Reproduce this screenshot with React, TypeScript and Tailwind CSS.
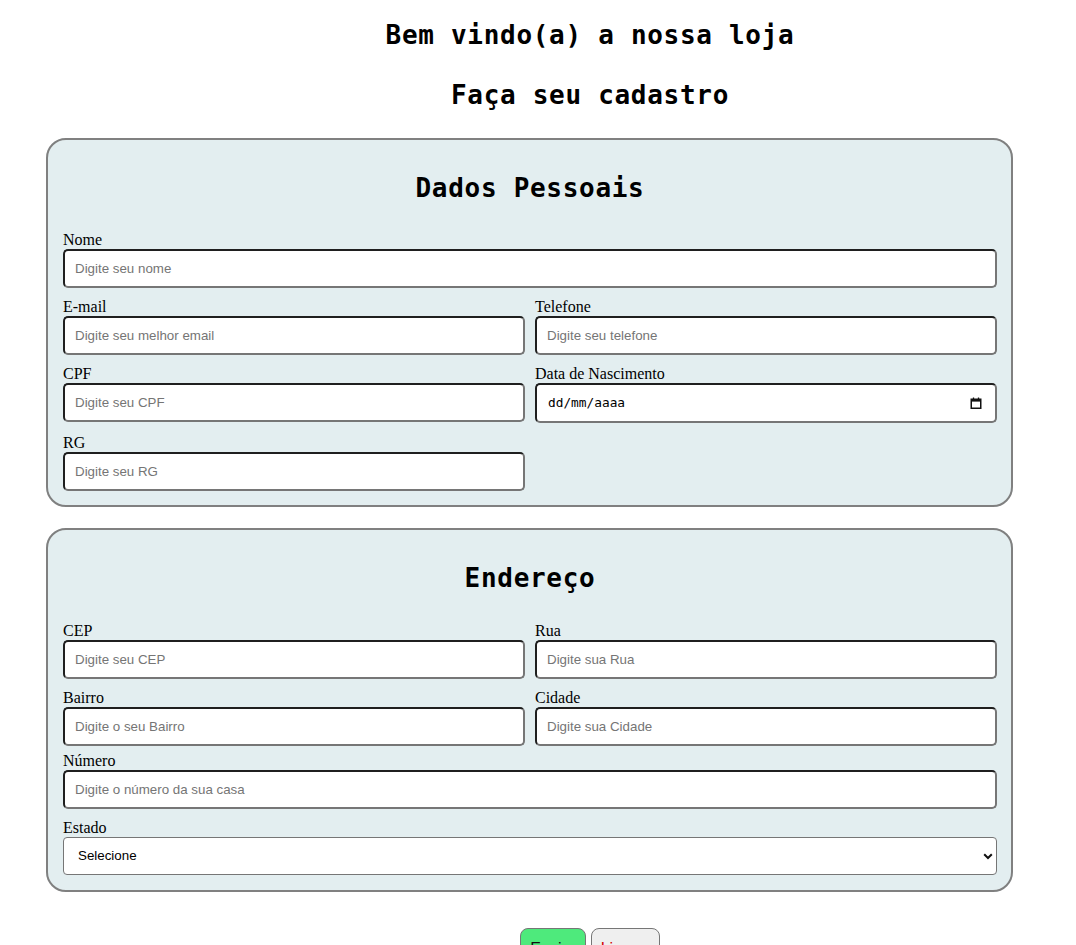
import React from "react";

const mono = "font-['DejaVu_Sans_Mono',monospace]";
const titleCls = `${mono} font-bold text-[26px] tracking-[0.7px] h-[34px] leading-[34px] text-center text-black`;
const labelCls = "block font-['Liberation_Serif',serif] text-[16px] leading-[18px] h-[18px] text-black";
const inputCls =
  "block w-full h-[39px] bg-white rounded-[5px] border-2 border-t-[#1f1f1f] border-l-[#1f1f1f] border-b-[#767676] border-r-[#767676] pl-[10px] font-['Liberation_Sans',Arial,sans-serif] text-[13.33px] text-black placeholder:text-[#757575] outline-none";

function Field({ label, placeholder }: { label: string; placeholder: string }) {
  return (
    <div>
      <label className={labelCls}>{label}</label>
      <input className={inputCls} placeholder={placeholder} />
    </div>
  );
}

function DateField() {
  return (
    <div>
      <label className={labelCls}>Data de Nascimento</label>
      <div className="flex items-center justify-between w-full h-[40px] bg-white rounded-[5px] border-2 border-t-[#1f1f1f] border-l-[#1f1f1f] border-b-[#767676] border-r-[#767676] pl-[11px] pr-[13px]">
        <span className={`${mono} text-[12.8px] text-black`}>dd/mm/aaaa</span>
        <svg width="12" height="12" viewBox="0 0 12 12" fill="none">
          <rect x="1.25" y="2.25" width="9.5" height="9" stroke="#111" strokeWidth="1.5" fill="none" />
          <rect x="1" y="2" width="10" height="2.6" fill="#111" />
          <line x1="3.5" y1="0.5" x2="3.5" y2="2.5" stroke="#111" strokeWidth="1.3" />
          <line x1="8.5" y1="0.5" x2="8.5" y2="2.5" stroke="#111" strokeWidth="1.3" />
        </svg>
      </div>
    </div>
  );
}

export default function App() {
  return (
    <div className="w-[1076px] min-h-[945px] bg-white pt-[18px] overflow-hidden">
      <h1 className={`${titleCls} pl-[104px]`}>Bem vindo(a) a nossa loja</h1>
      <h2 className={`${titleCls} pl-[104px] mt-[26px]`}>Faça seu cadastro</h2>

      <form className="mt-[26px] ml-[46px] w-[967px]">
        <fieldset className="border-2 border-[#808080] rounded-[20px] bg-[#e3eef0] pl-[15px] pr-[14px] pt-[31px] pb-[14px]">
          <h3 className={`${titleCls} mb-[26px]`}>Dados Pessoais</h3>
          <Field label="Nome" placeholder="Digite seu nome" />
          <div className="grid grid-cols-2 gap-x-[10px] mt-[10px]">
            <Field label="E-mail" placeholder="Digite seu melhor email" />
            <Field label="Telefone" placeholder="Digite seu telefone" />
          </div>
          <div className="grid grid-cols-2 gap-x-[10px] mt-[10px]">
            <Field label="CPF" placeholder="Digite seu CPF" />
            <DateField />
          </div>
          <div className="grid grid-cols-2 gap-x-[10px] mt-[11px]">
            <Field label="RG" placeholder="Digite seu RG" />
          </div>
        </fieldset>

        <fieldset className="mt-[21px] border-2 border-[#808080] rounded-[20px] bg-[#e3eef0] pl-[15px] pr-[14px] pt-[31px] pb-[15px]">
          <h3 className={`${titleCls} mb-[27px]`}>Endereço</h3>
          <div className="grid grid-cols-2 gap-x-[10px]">
            <Field label="CEP" placeholder="Digite seu CEP" />
            <Field label="Rua" placeholder="Digite sua Rua" />
          </div>
          <div className="grid grid-cols-2 gap-x-[10px] mt-[10px]">
            <Field label="Bairro" placeholder="Digite o seu Bairro" />
            <Field label="Cidade" placeholder="Digite sua Cidade" />
          </div>
          <div className="mt-[6px]">
            <Field label="Número" placeholder="Digite o número da sua casa" />
          </div>
          <div className="mt-[10px]">
            <label className={labelCls}>Estado</label>
            <div className="relative">
              <select className="appearance-none block w-full h-[38px] bg-white rounded-[4px] border border-[#767676] pl-[14px] font-['Liberation_Sans',Arial,sans-serif] text-[13.33px] text-black outline-none">
                <option>Selecione</option>
              </select>
              <svg className="absolute right-[4px] top-[16px] pointer-events-none" width="10" height="7" viewBox="0 0 10 7" fill="none">
                <path d="M1.2 1.2 L5 5 L8.8 1.2" stroke="#111" strokeWidth="2" />
              </svg>
            </div>
          </div>
        </fieldset>
      </form>

      <div className="mt-[36px] pl-[104px] flex justify-center gap-[5px]">
        <button className="h-[42px] px-[9px] rounded-[8px] border border-[#767676] bg-[#4eea7c] font-['Liberation_Sans',Arial,sans-serif] text-[16px] text-[#111]">
          Enviar
        </button>
        <button className="h-[42px] px-[9px] rounded-[8px] border border-[#767676] bg-[#efefef] font-['Liberation_Sans',Arial,sans-serif] text-[16px] text-[#d40000]">
          Limpar
        </button>
      </div>
    </div>
  );
}
